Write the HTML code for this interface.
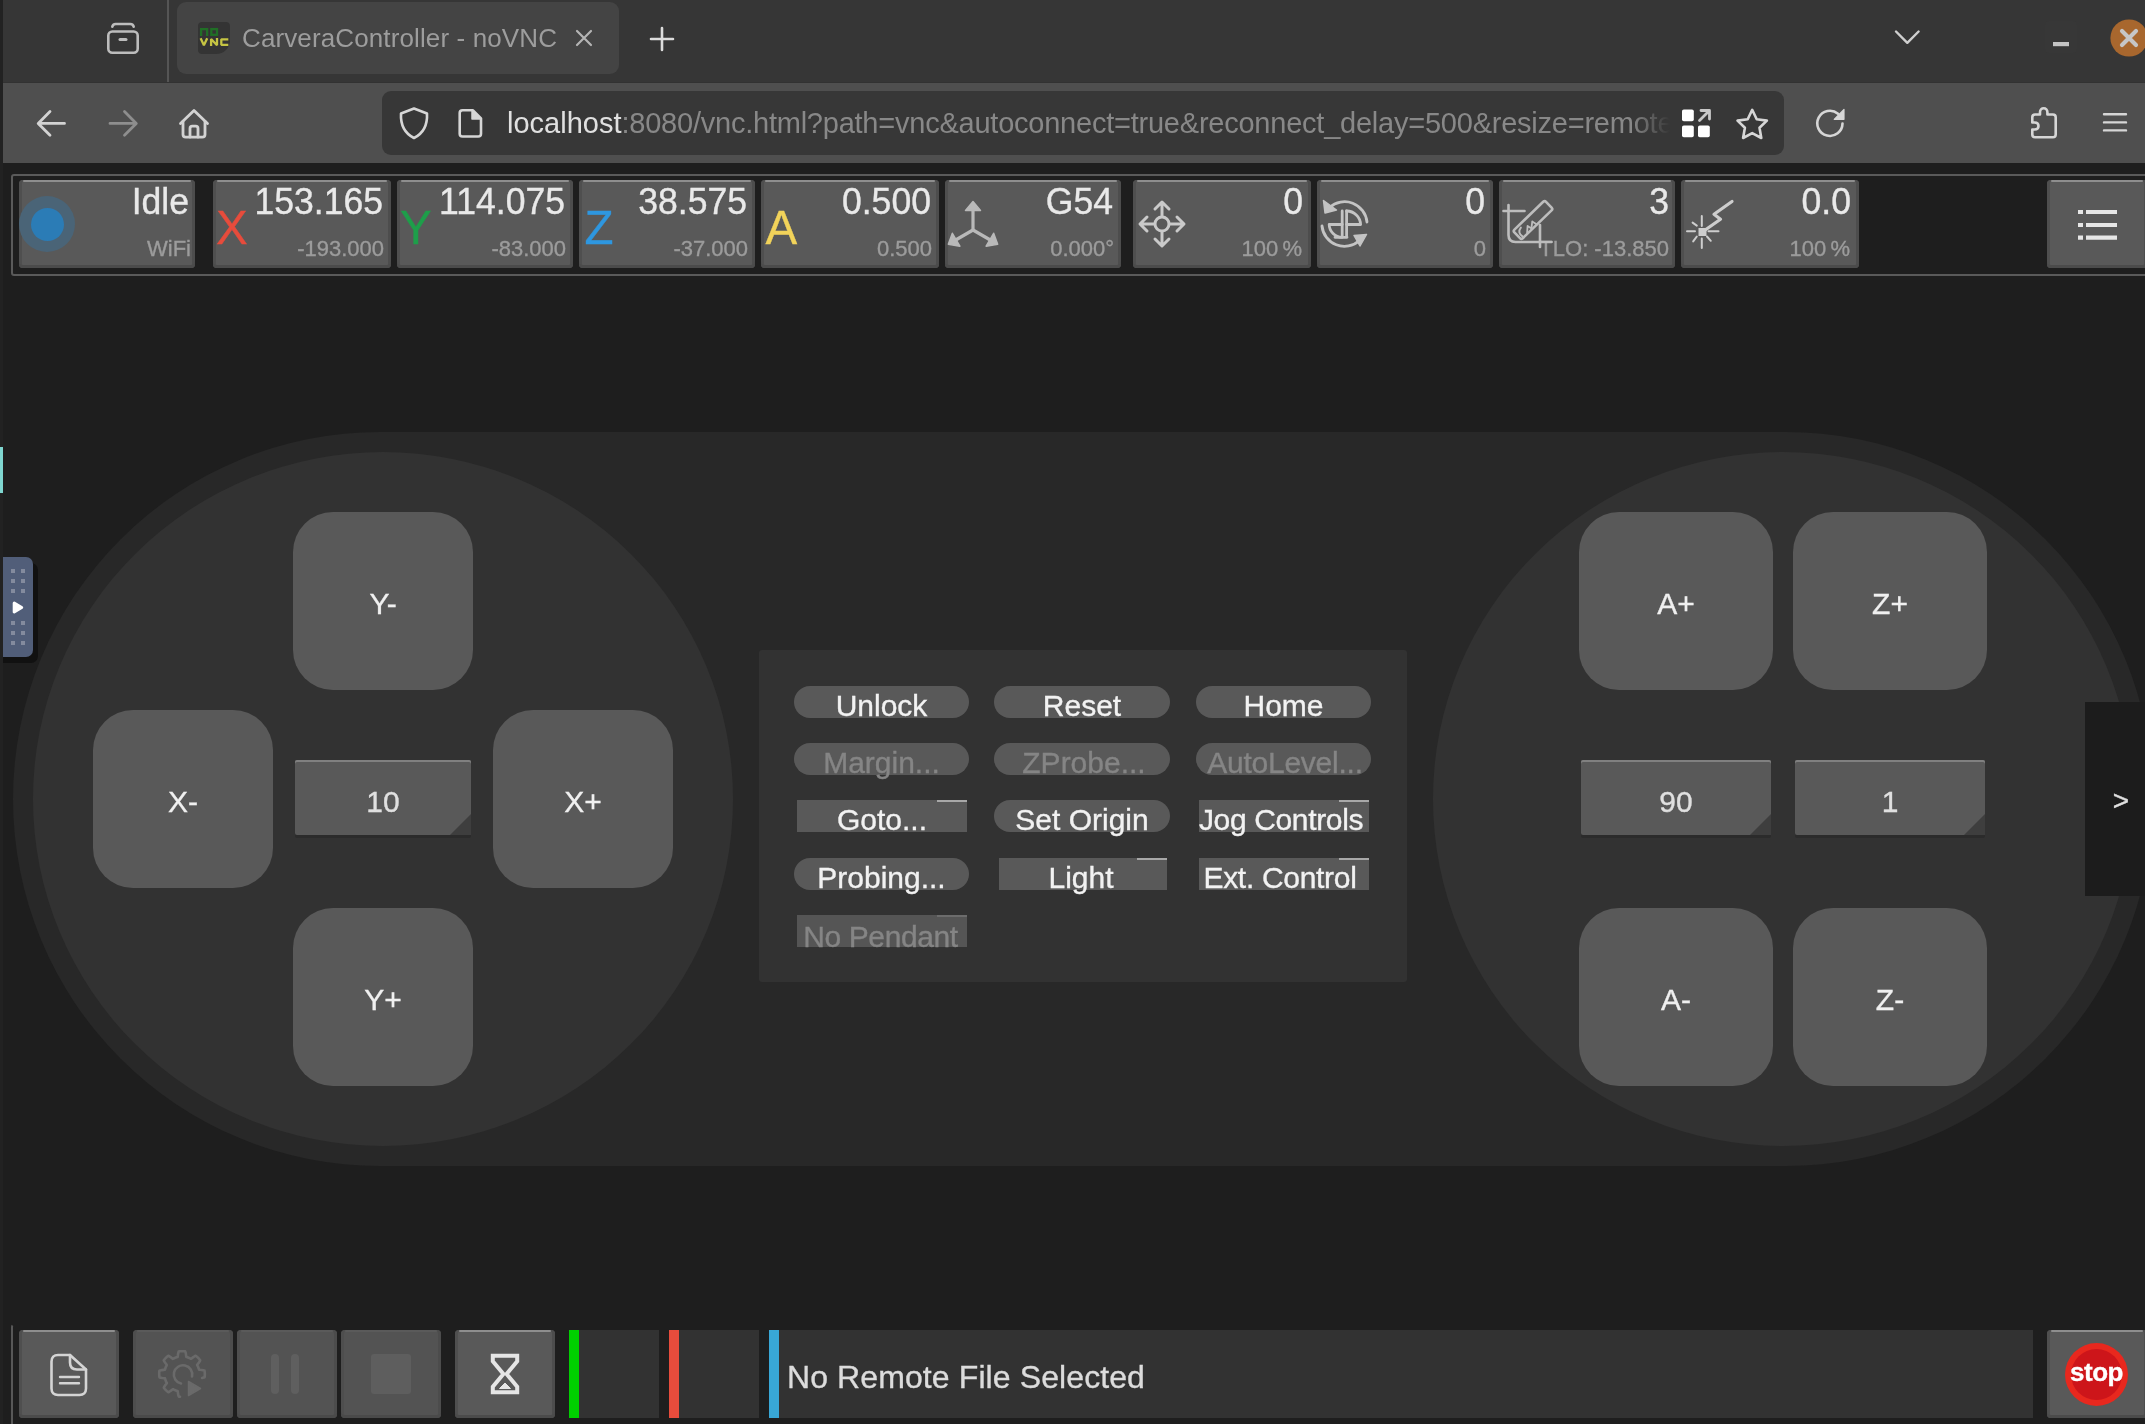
<!DOCTYPE html>
<html>
<head>
<meta charset="utf-8">
<title>CarveraController - noVNC</title>
<style>
*{box-sizing:border-box;margin:0;padding:0}
html,body{width:2145px;height:1424px;overflow:hidden;background:#1e1e1e;font-family:"Liberation Sans",sans-serif;}
.abs{position:absolute}
#vnc{position:absolute;left:0;top:0;width:2145px;height:1424px;filter:blur(0.55px);-webkit-text-stroke:0.35px}
#root{position:absolute;left:0;top:0;width:2145px;height:1424px;overflow:hidden;background:#1e1e1e}
/* browser chrome */
#tabbar{left:3px;top:0;width:2142px;height:83px;background:#363636;border-bottom:1px solid #323232}
#navbar{left:3px;top:83px;width:2142px;height:80px;background:#4f4f4f}
#lstrip{left:0;top:0;width:3px;height:1424px;background:#222222}
#tab{left:177px;top:2px;width:442px;height:72px;background:#444444;border-radius:9px}
#tabsep{left:167px;top:0;width:2px;height:82px;background:#555}
#tabtitle{will-change:transform;left:242px;top:20px;font-size:26px;letter-spacing:0.12px;line-height:36px;color:#9d9d9d;white-space:nowrap}
#urlbar{left:382px;top:91px;width:1402px;height:64px;background:#373737;border-radius:9px}
#url{left:507px;top:104px;font-size:29px;line-height:38px;color:#888888;white-space:nowrap;width:1163px;overflow:hidden;-webkit-mask-image:linear-gradient(to right,#000 0,#000 1125px,transparent 1163px);mask-image:linear-gradient(to right,#000 0,#000 1125px,transparent 1163px)}
#url b{font-weight:normal;color:#e0e0e0}
/* vnc */
.tb{position:absolute;top:180px;height:88px;background:#595959;border-radius:4px;box-shadow:inset 0 -3px 0 #4b4b4b, inset 3px 0 0 #4f4f4f, inset -3px 0 0 #4d4d4d}
.tb:before,.bb:before{content:"";position:absolute;left:4px;right:4px;top:0;height:2px;background:#8e8e8e;border-radius:1px}
.tb .v{position:absolute;right:8px;top:1px;font-size:35.6px;line-height:42px;transform:scaleY(1.04);transform-origin:50% 78%;color:#e9e9e9;white-space:nowrap}
.tb .s{position:absolute;right:7px;top:56px;font-size:22px;line-height:26px;color:#9c9c9c;white-space:nowrap}
.tb .ax{position:absolute;left:3px;top:21.5px;font-size:47.5px;line-height:52px}
.jog{will-change:transform;position:absolute;background:#595959;border-radius:40px;color:#f0f0f0;font-size:30px;text-align:center}
.step{position:absolute;height:75px;background:#595959;color:#e0e0e0;font-size:30px;text-align:center;line-height:84px;box-shadow:inset 0 2px 0 #808080, 0 3px 0 #2b2b2b;border-radius:2px}
.step:after{content:"";position:absolute;right:0;bottom:0;border-style:solid;border-width:0 0 21px 21px;border-color:transparent transparent #3e3e3e transparent}
.pill{position:absolute;height:32px;background:#595959;border-radius:16px;color:#f2f2f2;font-size:30px;line-height:40px;text-align:center;white-space:nowrap}
.rect{position:absolute;height:32px;background:#595959;color:#f2f2f2;font-size:30px;line-height:40px;text-align:center;white-space:nowrap}
.rect:after{content:"";position:absolute;right:0;top:0;width:30px;height:2px;background:#a8a8a8}
#nopend:after{background:#6c6c6c}
.dis{color:#858585}
.bb{position:absolute;top:1330px;height:88px;width:100px;background:#595959;border-radius:4px;box-shadow:inset 0 -3px 0 #4b4b4b, inset 3px 0 0 #4f4f4f, inset -3px 0 0 #4d4d4d}
.bbd{background:#535353;box-shadow:inset 0 -3px 0 #4a4a4a, inset 3px 0 0 #4e4e4e, inset -3px 0 0 #4c4c4c}
.bbd:before{background:#5a5a5a}
</style>
</head>
<body>
<div id="root">
<div id="vnc">
<!-- toolbar frame -->
<div class="abs" style="left:11px;top:174px;width:2200px;height:102px;border:2px solid #5a5a5a;border-radius:3px"></div>
<!-- status buttons -->
<div class="tb" style="left:19px;width:176px">
  <div class="abs" style="left:0px;top:16px;width:56px;height:56px;border-radius:50%;background:#4a6477"></div>
  <div class="abs" style="left:12px;top:28px;width:33px;height:33px;border-radius:50%;background:#2b7cb6"></div>
  <div class="v" style="right:6px">Idle</div><div class="s" style="right:4px">WiFi</div>
</div>
<div class="tb" style="left:213px;width:178px"><div class="ax" style="color:#e74c3c">X</div><div class="v">153.165</div><div class="s">-193.000</div></div>
<div class="tb" style="left:397px;width:176px"><div class="ax" style="color:#1e9e4a">Y</div><div class="v">114.075</div><div class="s">-83.000</div></div>
<div class="tb" style="left:579px;width:176px"><div class="ax" style="color:#2e97e0;left:5.5px">Z</div><div class="v">38.575</div><div class="s">-37.000</div></div>
<div class="tb" style="left:761px;width:178px"><div class="ax" style="color:#f2d35a;left:4.5px">A</div><div class="v">0.500</div><div class="s">0.500</div></div>
<div class="tb" style="left:945px;width:176px"><!--ICO_AXES--><div class="v">G54</div><div class="s">0.000°</div></div>
<div class="tb" style="left:1133px;width:178px"><!--ICO_MOVE--><div class="v">0</div><div class="s" style="word-spacing:-2px;right:9px">100 %</div></div>
<div class="tb" style="left:1317px;width:176px"><!--ICO_SPIN--><div class="v">0</div><div class="s">0</div></div>
<div class="tb" style="left:1499px;width:176px"><!--ICO_TOOL--><div class="v" style="right:6px">3</div><div class="s" style="right:6px">TLO: -13.850</div></div>
<div class="tb" style="left:1681px;width:178px"><!--ICO_LASER--><div class="v">0.0</div><div class="s" style="word-spacing:-2px;right:9px">100 %</div></div>
<div class="tb" style="left:2047px;width:100px"><!--ICO_MENU--></div>

<!-- jog background -->
<div class="abs" style="left:13px;top:432px;width:2140px;height:734px;border-radius:367px;background:#282828"></div>
<div class="abs" style="left:33px;top:452px;width:700px;height:694px;border-radius:50%;background:#323232"></div>
<div class="abs" style="left:1433px;top:452px;width:700px;height:694px;border-radius:50%;background:#323232"></div>
<!-- left jog -->
<div class="jog" style="left:293px;top:512px;width:180px;height:178px;line-height:184px">Y-</div>
<div class="jog" style="left:93px;top:710px;width:180px;height:178px;line-height:184px">X-</div>
<div class="jog" style="left:493px;top:710px;width:180px;height:178px;line-height:184px">X+</div>
<div class="jog" style="left:293px;top:908px;width:180px;height:178px;line-height:184px">Y+</div>
<div class="step" style="left:295px;top:760px;width:176px">10</div>
<!-- right jog -->
<div class="jog" style="left:1579px;top:512px;width:194px;height:178px;line-height:184px">A+</div>
<div class="jog" style="left:1793px;top:512px;width:194px;height:178px;line-height:184px">Z+</div>
<div class="jog" style="left:1579px;top:908px;width:194px;height:178px;line-height:184px">A-</div>
<div class="jog" style="left:1793px;top:908px;width:194px;height:178px;line-height:184px">Z-</div>
<div class="step" style="left:1581px;top:760px;width:190px">90</div>
<div class="step" style="left:1795px;top:760px;width:190px">1</div>
<div class="abs" style="will-change:transform;left:2085px;top:702px;width:60px;height:194px;background:#1c1c1c;color:#e0e0e0;font-size:28px;line-height:198px;text-align:center;padding-left:12px">&gt;</div>
<!-- center panel -->
<div class="abs" style="left:759px;top:650px;width:648px;height:332px;background:#323232;border-radius:3px"></div>
<div class="pill" style="left:794px;top:686px;width:175px">Unlock</div>
<div class="pill" style="left:994px;top:686px;width:176px">Reset</div>
<div class="pill" style="left:1196px;top:686px;width:175px">Home</div>
<div class="pill dis" style="left:794px;top:743px;width:175px">Margin...</div>
<div class="pill dis" style="left:994px;top:743px;width:176px;padding-left:4px">ZProbe...</div>
<div class="pill dis" style="left:1196px;top:743px;width:175px;letter-spacing:-0.25px;padding-left:3px">AutoLevel...</div>
<div class="rect" style="left:797px;top:800px;width:170px">Goto...</div>
<div class="pill" style="left:994px;top:800px;width:176px">Set Origin</div>
<div class="rect" style="left:1199px;top:800px;width:170px;letter-spacing:-0.35px;text-indent:-6px">Jog Controls</div>
<div class="pill" style="left:794px;top:858px;width:175px">Probing...</div>
<div class="rect" style="left:999px;top:858px;width:168px;padding-right:4px">Light</div>
<div class="rect" style="left:1199px;top:858px;width:170px;letter-spacing:-0.3px;text-indent:-8px">Ext. Control</div>
<div class="rect dis" style="left:797px;top:915px;width:170px;background:#555;letter-spacing:-0.4px;line-height:43px;padding-right:3px" id="nopend">No Pendant</div>

<!-- bottom bar -->
<div class="abs" style="left:11px;top:1324px;width:2200px;height:120px;border:2px solid #585858;border-radius:3px;border-top-color:#1e1e1e"></div>
<div class="bb" style="left:19px"><!--ICO_FILE--></div>
<div class="bb bbd" style="left:133px"><!--ICO_GEAR--></div>
<div class="bb bbd" style="left:237px"><!--ICO_PAUSE--></div>
<div class="bb bbd" style="left:341px"><!--ICO_STOPSQ--></div>
<div class="bb" style="left:455px"><!--ICO_HOUR--></div>
<div class="abs" style="left:569px;top:1330px;width:90px;height:88px;background:#323232"></div>
<div class="abs" style="left:569px;top:1330px;width:10px;height:88px;background:#00d000"></div>
<div class="abs" style="left:669px;top:1330px;width:90px;height:88px;background:#323232"></div>
<div class="abs" style="left:669px;top:1330px;width:10px;height:88px;background:#e74c3c"></div>
<div class="abs" style="left:769px;top:1330px;width:1264px;height:88px;background:#323232"></div>
<div class="abs" style="left:769px;top:1330px;width:10px;height:88px;background:#38a7d6"></div>
<div class="abs" style="will-change:transform;left:787px;top:1357px;font-size:32px;line-height:40px;color:#dcdcdc;letter-spacing:0.1px;white-space:nowrap">No Remote File Selected</div>
<div class="bb" style="left:2047px;width:100px">
  <div class="abs" style="left:18px;top:13px;width:63px;height:63px;border-radius:50%;background:#e8281e"></div>
  <div class="abs" style="left:24px;top:19px;width:51px;height:51px;border-radius:50%;background:#cd151a"></div>
  <div class="abs" style="left:18px;top:25px;width:63px;text-align:center;font-size:26px;line-height:34px;font-weight:bold;color:#fff;letter-spacing:-0.5px">stop</div>
</div>
<svg id="vicons" class="abs" style="left:0;top:0" width="2145" height="1424" viewBox="0 0 2145 1424" fill="none" stroke-linecap="round" stroke-linejoin="round">
<!-- AXES icon -->
<g stroke="#b9b9b9" stroke-width="3.2" fill="#b9b9b9">
<g><path d="M973 230V208" fill="none"/><path d="M973 201.500l7.500 9h-15z" stroke-width="1.500"/></g>
<g transform="rotate(120 973 230)"><path d="M973 230V208" fill="none"/><path d="M973 201.500l7.500 9h-15z" stroke-width="1.500"/></g>
<g transform="rotate(240 973 230)"><path d="M973 230V208" fill="none"/><path d="M973 201.500l7.500 9h-15z" stroke-width="1.500"/></g>
</g>
<!-- MOVE icon -->
<g stroke="#cacaca" stroke-width="3">
<circle cx="1162" cy="224" r="7"/>
<path d="M1162 216V203M1155 209l7-7 7 7"/>
<path d="M1162 232v13M1155 239l7 7 7-7"/>
<path d="M1154 224h-13M1147 217l-7 7 7 7"/>
<path d="M1170 224h13M1177 217l7 7-7 7"/>
</g>
<!-- SPINDLE icon -->
<g stroke="#c4c4c4" stroke-width="2.800">
<path d="M1367 222a22.500 22.500 0 0 0-37.500-14.500"/>
<path d="M1322 226a22.500 22.500 0 0 0 37.500 14.500"/>
<path d="M1323.500 200.500l1.500 12.500 11.500-3z" fill="#c4c4c4" stroke-width="1.500"/>
<path d="M1366.500 234.500l-12.500 1 6 10.500z" fill="#c4c4c4" stroke-width="1.500"/>
<path d="M1342.200 211v26M1346.600 211v26M1335 237.300h12"/>
<path d="M1346.600 211a14 14 0 0 1 14 13.500h-14"/>
<path d="M1342.200 237.300a13 13 0 0 1-13-12.800h13"/>
</g>
<!-- TOOL icon -->
<g stroke="#bdbdbd" stroke-width="2.600">
<path d="M1503.500 211h21"/>
<path d="M1508.500 205v30c0 4.500 2.500 7 7 7h36"/>
<path d="M1540 225v22"/>
<g transform="rotate(-44 1533 220)">
<rect x="1511" y="214" width="44" height="12" rx="2"/>
<path d="M1514 224.500c-1-4 1-7 5-7.500" stroke-width="2"/>
<path d="M1520 225l5-4.500 1 4.500 5.500-4.500 1 4.500" stroke-width="1.800"/>
</g>
</g>
<!-- LASER icon -->
<g stroke="#cdcdcd" stroke-width="3.200">
<path d="M1703 231.500l17.500-12.300-6.500-5 18-12.700"/>
<rect x="1698.500" y="228" width="8" height="8" fill="#cdcdcd" stroke="none"/>
<path d="M1701.800 216v10M1701.800 238.500v9.500M1687 231.200h8M1708.500 231.200h10M1692.600 222.600l4.200 3M1693.200 241.400l3.600-4.900M1707 236.500l3.800 4.300" stroke-width="2"/>
</g>
<!-- MENU icon -->
<g stroke="#e6e6e6" stroke-width="4.200" stroke-linecap="butt">
<path d="M2086 212h31M2086 225h31M2086 237.600h31"/>
<path d="M2078 212h5M2078 225h5M2078 237.600h5"/>
</g>
<!-- FILE icon -->
<g stroke="#d4d4d4" stroke-width="2.600">
<path d="M58 1355h12l16 14.500v19c0 4-2.500 6.500-6.500 6.500h-21.500c-4 0-6.500-2.500-6.500-6.500v-27c0-4 2.500-6.500 6.500-6.500z"/>
<path d="M70 1355v7.500c0 4.700 2.300 7 7 7h9"/>
<path d="M60 1377h19M60 1383.300h19" stroke-width="2.400"/>
</g>
<!-- GEAR icon (disabled) -->
<g stroke="#6a6a6a" stroke-width="2.600">
<path d="M180.0 1396.7 L179.4 1396.7 L178.8 1396.6 L178.4 1395.6 L178.1 1394.1 L177.9 1392.6 L177.7 1391.1 L177.3 1391.0 L176.9 1390.8 L176.4 1390.7 L176.0 1390.5 L175.5 1390.4 L175.1 1390.2 L174.7 1390.0 L174.3 1389.8 L173.9 1389.6 L173.5 1389.4 L173.1 1389.2 L172.2 1389.7 L171.0 1390.6 L169.7 1391.5 L168.4 1392.3 L168.0 1392.0 L167.5 1391.6 L167.0 1391.2 L166.6 1390.8 L166.2 1390.4 L165.7 1390.0 L165.3 1389.5 L164.9 1389.1 L164.5 1388.7 L164.2 1388.2 L163.8 1387.7 L164.2 1386.7 L165.1 1385.4 L166.0 1384.2 L166.9 1383.1 L166.7 1382.7 L166.5 1382.3 L166.2 1381.9 L166.0 1381.4 L165.9 1381.0 L165.7 1380.6 L165.5 1380.2 L165.4 1379.7 L165.2 1379.3 L165.1 1378.9 L165.0 1378.4 L163.9 1378.2 L162.4 1378.0 L160.9 1377.7 L159.5 1377.4 L159.4 1376.8 L159.3 1376.2 L159.3 1375.6 L159.2 1375.0 L159.2 1374.4 L159.2 1373.8 L159.2 1373.2 L159.2 1372.6 L159.3 1372.0 L159.3 1371.4 L159.4 1370.8 L160.4 1370.4 L161.9 1370.1 L163.4 1369.9 L164.9 1369.7 L165.0 1369.3 L165.2 1368.9 L165.3 1368.4 L165.5 1368.0 L165.6 1367.5 L165.8 1367.1 L166.0 1366.7 L166.2 1366.3 L166.4 1365.9 L166.6 1365.5 L166.8 1365.1 L166.3 1364.2 L165.4 1363.0 L164.5 1361.7 L163.7 1360.4 L164.0 1360.0 L164.4 1359.5 L164.8 1359.0 L165.2 1358.6 L165.6 1358.2 L166.0 1357.7 L166.5 1357.3 L166.9 1356.9 L167.3 1356.5 L167.8 1356.2 L168.3 1355.8 L169.3 1356.2 L170.6 1357.1 L171.8 1358.0 L172.9 1358.9 L173.3 1358.7 L173.7 1358.5 L174.1 1358.2 L174.6 1358.0 L175.0 1357.9 L175.4 1357.7 L175.8 1357.5 L176.3 1357.4 L176.7 1357.2 L177.1 1357.1 L177.6 1357.0 L177.8 1355.9 L178.0 1354.4 L178.3 1352.9 L178.6 1351.5 L179.2 1351.4 L179.8 1351.3 L180.4 1351.3 L181.0 1351.2 L181.6 1351.2 L182.2 1351.2 L182.8 1351.2 L183.4 1351.2 L184.0 1351.3 L184.6 1351.3 L185.2 1351.4 L185.6 1352.4 L185.9 1353.9 L186.1 1355.4 L186.3 1356.9 L186.7 1357.0 L187.1 1357.2 L187.6 1357.3 L188.0 1357.5 L188.5 1357.6 L188.9 1357.8 L189.3 1358.0 L189.7 1358.2 L190.1 1358.4 L190.5 1358.6 L190.9 1358.8 L191.8 1358.3 L193.0 1357.4 L194.3 1356.5 L195.6 1355.7 L196.0 1356.0 L196.5 1356.4 L197.0 1356.8 L197.4 1357.2 L197.8 1357.6 L198.3 1358.0 L198.7 1358.5 L199.1 1358.9 L199.5 1359.3 L199.8 1359.8 L200.2 1360.3 L199.8 1361.3 L198.9 1362.6 L198.0 1363.8 L197.1 1364.9 L197.3 1365.3 L197.5 1365.7 L197.8 1366.1 L198.0 1366.6 L198.1 1367.0 L198.3 1367.4 L198.5 1367.8 L198.6 1368.3 L198.8 1368.7 L198.9 1369.1 L199.0 1369.6 L200.1 1369.8 L201.6 1370.0 L203.1 1370.3 L204.5 1370.6 L204.6 1371.2 L204.7 1371.8 L204.7 1372.4 L204.8 1373.0 L204.8 1373.6 L204.8 1374.2 L204.8 1374.8 L204.8 1375.4 L204.7 1376.0 L204.7 1376.6 L204.6 1377.2 L203.6 1377.6 L202.1 1377.9"/>
<path d="M192 1376.500a9.200 9.200 0 1 0-11 7"/>
<path d="M188.500 1381.500l12 7-12 7z" fill="#6a6a6a" stroke-width="1.500"/>
</g>
<!-- PAUSE (disabled) -->
<g stroke="#5f5f5f" stroke-width="8">
<path d="M275 1358v32M295 1358v32"/>
</g>
<!-- STOP square (disabled) -->
<rect x="371" y="1354" width="40" height="40" rx="3" fill="#5e5e5e"/>
<!-- HOURGLASS -->
<g stroke="#e6e6e6" stroke-width="4" stroke-linejoin="miter" stroke-linecap="butt">
<path d="M492.800 1355.800h24.400v5.400l-10.600 12.800 10.600 12.800v5.400h-24.400v-5.400l10.600-12.800-10.600-12.800z"/>
<path d="M499.500 1388.500l5.500-5.500 5.500 5.500z" fill="#e6e6e6" stroke-width="1"/>
</g>
</svg>
</div>
<div id="lstrip" class="abs"></div>
<div id="tabbar" class="abs"></div>
<div id="navbar" class="abs"></div>
<div id="tabsep" class="abs"></div>
<div id="tab" class="abs"></div>
<div id="tabtitle" class="abs">CarveraController - noVNC</div>
<div id="urlbar" class="abs"></div>
<div id="url" class="abs"><b>localhost</b><span style="letter-spacing:-0.23px">:8080/vnc.html?path=vnc&amp;autoconnect=true&amp;reconnect_delay=500&amp;resize=remote</span></div>

<svg class="abs" style="left:0;top:0" width="2145" height="163" viewBox="0 0 2145 163" fill="none" stroke-linecap="round" stroke-linejoin="round">
<!-- firefox view -->
<g stroke="#bdbdbd" stroke-width="2.6">
<rect x="108.3" y="31.5" width="29.4" height="21.2" rx="4"/>
<path d="M120 39.5h6" stroke-width="3"/>
<path d="M112.300 26.800c.3-1.800 1.500-2.800 3.400-2.800h14.600c1.900 0 3.100 1 3.400 2.800"/>
</g>
<!-- favicon -->
<path d="M202 22h24c2.500 0 4 1.500 4 4v14c0 8-6 14-14 14h-14c-2.500 0-4-1.500-4-4v-24c0-2.500 1.500-4 4-4z" fill="#343434"/>
<g stroke="#206f26" stroke-width="2.300" stroke-linecap="butt" stroke-linejoin="miter">
<path d="M201.100 36v-6.900h6v6.900"/>
<rect x="211.300" y="29.100" width="5.700" height="5.700"/>
</g>
<g stroke="#c5c443" stroke-width="2.300" stroke-linecap="butt" stroke-linejoin="bevel">
<path d="M200.600 38.300l3.300 7 3.300-7"/>
<path d="M211.100 46v-7l5.900 6.300v-7.200"/>
<path d="M228.300 39.300h-7v5.500h7"/>
</g>
<!-- tab close -->
<path d="M577 31l14 14M591 31l-14 14" stroke="#b4b4b4" stroke-width="2.2"/>
<!-- new tab -->
<path d="M651 39h22M662 28v22" stroke="#dcdcdc" stroke-width="2.6"/>
<!-- chevron -->
<path d="M1896 31.5l11.3 11.3 11.3-11.3" stroke="#cfcfcf" stroke-width="2.4"/>
<!-- minimize -->
<rect x="2045" y="21" width="32" height="32" rx="4" fill="#373737"/>
<rect x="2053" y="42" width="16" height="4.2" fill="#c4c4c4"/>
<!-- close -->
<circle cx="2129" cy="38" r="18.6" fill="#a8672e"/>
<path d="M2122 31l14 14M2136 31l-14 14" stroke="#c6c6c6" stroke-width="4.2"/>
<!-- back -->
<path d="M38.5 123.4h26M50 111.6l-11.8 11.8 11.8 11.8" stroke="#d3d3d3" stroke-width="2.8"/>
<!-- forward -->
<path d="M110 123.4h26M124.5 111.6l11.8 11.8-11.8 11.8" stroke="#8e8e8e" stroke-width="2.8"/>
<!-- home -->
<g stroke="#d3d3d3" stroke-width="2.8">
<path d="M180.5 123.5L194 110.5l13.5 13"/>
<path d="M183 121.5v13c0 1.7 1 2.7 2.7 2.7h16.6c1.7 0 2.7-1 2.7-2.7v-13"/>
<path d="M190 137v-8.5c0-1.5.8-2.3 2.300-2.300h3.400c1.500 0 2.300.8 2.300 2.300v8.500"/>
</g>
<!-- shield -->
<path d="M414 108.500l13 5c.5 10-3 19.500-13 24.500-10-5-13.500-14.500-13-24.500z" stroke="#d6d6d6" stroke-width="2.6"/>
<!-- page -->
<path d="M462.500 110.300h10.500l8 8v15.400c0 1.800-1 2.800-2.800 2.800h-15.700c-1.800 0-2.800-1-2.800-2.800v-20.600c0-1.800 1-2.800 2.800-2.800z" stroke="#d6d6d6" stroke-width="2.6"/>
<path d="M472 110v9h9z" fill="#d6d6d6" stroke="#d6d6d6" stroke-width="1.500"/>
<!-- grid -->
<g fill="#ffffff" stroke="none">
<rect x="1682" y="109.500" width="11.800" height="11.800" rx="1.800"/>
<rect x="1682" y="125.500" width="11.800" height="11.800" rx="1.800"/>
<rect x="1698" y="125.500" width="11.800" height="11.800" rx="1.800"/>
</g>
<path d="M1699.500 120.500l9-9M1701 110.500h8.500v8.500" stroke="#c8c8c8" stroke-width="2.800"/>
<!-- star -->
<path d="M1752.200 109.800l4.500 9.400 10.200 1.400-7.400 7.200 1.800 10.200-9.100-4.900-9.100 4.900 1.800-10.200-7.400-7.200 10.200-1.400z" stroke="#d6d6d6" stroke-width="2.600"/>
<!-- reload -->
<path d="M1842.500 123.500a12.600 12.600 0 1 1-4.500-9.800" stroke="#d6d6d6" stroke-width="2.600"/>
<path d="M1844 109.500v9.800h-9.800z" fill="#d6d6d6" stroke="#d6d6d6" stroke-width="1.200"/>
<!-- puzzle -->
<path d="M2040 114.500v-2.300c0-2.300 1.600-3.900 3.700-3.900s3.700 1.600 3.700 3.900v2.300h5.500c1.800 0 2.800 1 2.800 2.800v17.200c0 1.800-1 2.800-2.800 2.800h-17.800c-1.800 0-2.800-1-2.800-2.800v-5h2.300c2.300 0 3.900-1.400 3.900-3.500s-1.600-3.500-3.900-3.500h-2.300v-5.200c0-1.800 1-2.800 2.800-2.800z" stroke="#d6d6d6" stroke-width="2.600"/>
<!-- hamburger -->
<path d="M2104 114.200h22M2104 122.400h22M2104 130.400h22" stroke="#d6d6d6" stroke-width="2.400"/>
</svg>


<!-- novnc handle + left teal -->
<div class="abs" style="left:0;top:447px;width:3px;height:46px;background:#7fd6d0"></div>
<div class="abs" style="left:3px;top:557px;width:30px;height:100px;background:#515e79;border-radius:0 7px 7px 0;box-shadow:5px 6px 0 #111, 0 6px 0 #111"><svg class="abs" style="left:0;top:0" width="30" height="100" viewBox="0 0 30 100">
<g fill="#838b9e">
<rect x="8" y="12" width="4" height="4"/><rect x="18" y="12" width="4" height="4"/>
<rect x="8" y="22" width="4" height="4"/><rect x="18" y="22" width="4" height="4"/>
<rect x="8" y="32" width="4" height="4"/><rect x="18" y="32" width="4" height="4"/>
<rect x="8" y="64" width="4" height="4"/><rect x="18" y="64" width="4" height="4"/>
<rect x="8" y="74" width="4" height="4"/><rect x="18" y="74" width="4" height="4"/>
<rect x="8" y="84" width="4" height="4"/><rect x="18" y="84" width="4" height="4"/>
</g>
<path d="M11.200 46l7.500 4.500-7.500 4.500z" fill="#fff" stroke="#fff" stroke-width="3" stroke-linejoin="round"/>
</svg></div>

</div>
</body>
</html>
